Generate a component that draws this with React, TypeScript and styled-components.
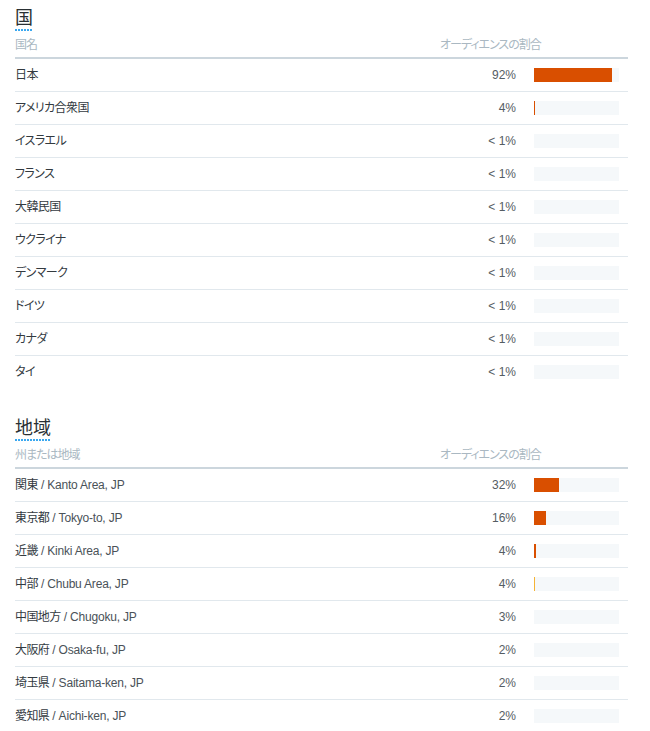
import React from "react";
import styled, { createGlobalStyle } from "styled-components";

const Global = createGlobalStyle`
  html, body { margin: 0; padding: 0; background: #ffffff; }
  body {
    font-family: "Liberation Sans", "Noto Sans CJK JP", sans-serif;
    -webkit-font-smoothing: antialiased;
  }
`;

const Page = styled.div`
  width: 613px;
  padding: 0 22px 0 15px;
`;

const Section = styled.section<{ $first?: boolean }>`
  padding-top: 8px;
  margin-top: ${(p) => (p.$first ? "0" : "21px")};
`;

const Title = styled.h2`
  display: inline-block;
  margin: 0;
  font-size: 18px;
  line-height: 21px;
  padding-bottom: 2px;
  font-weight: normal;
  color: #292f33;
  background-image: linear-gradient(to right, #3aa8f0 0 2px, #ffffff 2px 3px);
  background-size: 3px 2px;
  background-position: left bottom;
  background-repeat: repeat-x;
`;

const Grid = styled.div`
  display: grid;
  grid-template-columns: 1fr 80px 85px;
  column-gap: 18px;
  padding-right: 9px;
  align-items: center;
`;

const HeaderRow = styled(Grid)`
  padding-top: 6px;
  padding-bottom: 4px;
  border-bottom: 2px solid #ccd6dd;
  font-size: 12px;
  line-height: 16px;
  color: #aab8c2;
  font-feature-settings: "palt" 1;
  letter-spacing: -1px;
`;

const HeaderShare = styled.div`
  grid-column: 2 / 4;
  padding-left: 4px;
`;

const Row = styled(Grid)<{ $last?: boolean }>`
  box-sizing: border-box;
  height: 33px;
  padding-bottom: 1px;
  border-bottom: ${(p) => (p.$last ? "none" : "1px solid #e1e8ed")};
  font-size: 12px;
  line-height: 14px;
  color: #333a3f;
`;

const Name = styled.div`
  white-space: nowrap;
  font-feature-settings: "palt" 1;
  letter-spacing: -0.6px;
`;

const Sub = styled.span`
  color: #4a5258;
  letter-spacing: -0.2px;
  font-feature-settings: normal;
`;

const Pct = styled.div`
  text-align: right;
  color: #555d63;
`;

const Track = styled.div`
  height: 14px;
  background: #f5f8fa;
  display: flex;
`;

const Fill = styled.div<{ $color: string }>`
  height: 100%;
  background: ${(p) => p.$color};
`;

type Item = { name: string; sub?: string; pct: string; bar: number; color?: string };

const countries: Item[] = [
  { name: "日本", pct: "92%", bar: 77.7 },
  { name: "アメリカ合衆国", pct: "4%", bar: 1.4 },
  { name: "イスラエル", pct: "< 1%", bar: 0 },
  { name: "フランス", pct: "< 1%", bar: 0 },
  { name: "大韓民国", pct: "< 1%", bar: 0 },
  { name: "ウクライナ", pct: "< 1%", bar: 0 },
  { name: "デンマーク", pct: "< 1%", bar: 0 },
  { name: "ドイツ", pct: "< 1%", bar: 0 },
  { name: "カナダ", pct: "< 1%", bar: 0 },
  { name: "タイ", pct: "< 1%", bar: 0 },
];

const regions: Item[] = [
  { name: "関東", sub: "Kanto Area, JP", pct: "32%", bar: 25 },
  { name: "東京都", sub: "Tokyo-to, JP", pct: "16%", bar: 12 },
  { name: "近畿", sub: "Kinki Area, JP", pct: "4%", bar: 2 },
  { name: "中部", sub: "Chubu Area, JP", pct: "4%", bar: 1, color: "#f5b335" },
  { name: "中国地方", sub: "Chugoku, JP", pct: "3%", bar: 0 },
  { name: "大阪府", sub: "Osaka-fu, JP", pct: "2%", bar: 0 },
  { name: "埼玉県", sub: "Saitama-ken, JP", pct: "2%", bar: 0 },
  { name: "愛知県", sub: "Aichi-ken, JP", pct: "2%", bar: 0 },
];

function Table({ title, label, items, first }: { title: string; label: string; items: Item[]; first?: boolean }) {
  return (
    <Section $first={first}>
      <Title>{title}</Title>
      <HeaderRow>
        <div>{label}</div>
        <HeaderShare>オーディエンスの割合</HeaderShare>
      </HeaderRow>
      {items.map((it, i) => (
        <Row key={it.name} $last={i === items.length - 1}>
          <Name>
            {it.name}
            {it.sub && <Sub> / {it.sub}</Sub>}
          </Name>
          <Pct>{it.pct}</Pct>
          <Track>
            {it.bar > 0 && <Fill $color={it.color ?? "#d94f00"} style={{ width: `${it.bar}px` }} />}
          </Track>
        </Row>
      ))}
    </Section>
  );
}

export default function App() {
  return (
    <Page>
      <Global />
      <Table first title="国" label="国名" items={countries} />
      <Table title="地域" label="州または地域" items={regions} />
    </Page>
  );
}
